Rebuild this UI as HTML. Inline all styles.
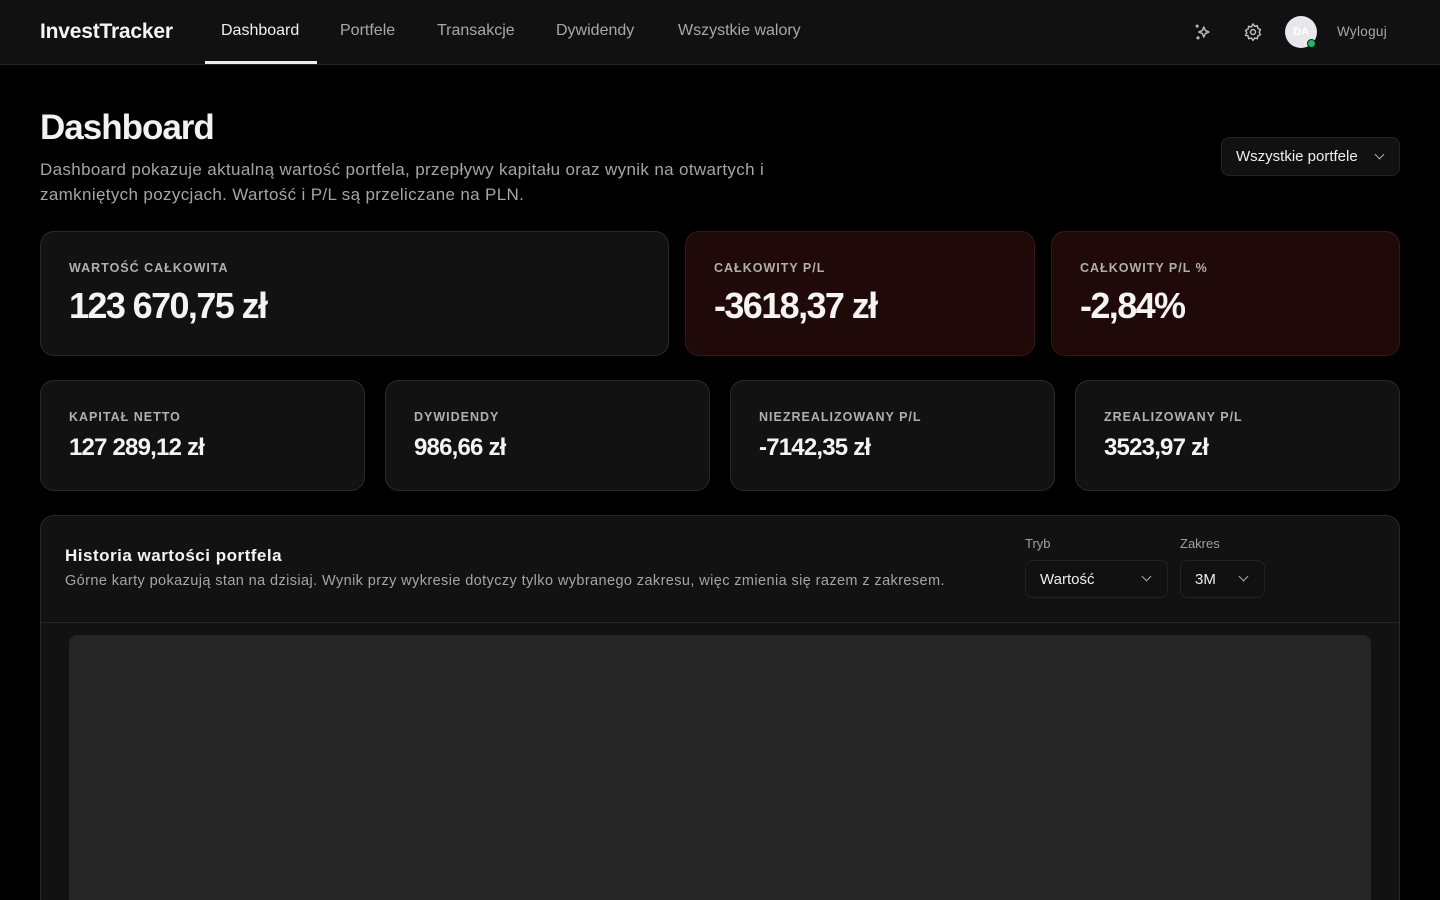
<!DOCTYPE html>
<html><head><meta charset="utf-8"><style>
*{box-sizing:border-box;margin:0;padding:0}
html,body{width:1440px;height:900px;overflow:hidden}
body{background:#000;font-family:"Liberation Sans","DejaVu Sans",sans-serif;color:#f2f2f2;position:relative}
.nav{height:65px;background:#111;border-bottom:1px solid #262626;position:relative}
.logo{position:absolute;left:40px;top:20px;font-size:21px;font-weight:bold;letter-spacing:-0.2px;color:#f4f4f4}
.tab{position:absolute;top:22px;font-size:16px;color:#a8a8a8}
.tab.act{color:#f0f0f0}
.ul{position:absolute;left:205px;width:112px;top:61px;height:3px;background:#eee}
.avatar{position:absolute;left:1285px;top:16px;width:32px;height:32px;border-radius:50%;background:#e8e8ea;color:#fff;font-size:11px;font-weight:bold;text-align:center;line-height:32px}
.dot{position:absolute;left:1307px;top:39px;width:9px;height:9px;border-radius:50%;background:#1fb86b;border:1px solid #111}
h1{position:absolute;left:40px;top:108px;font-size:35px;font-weight:bold;letter-spacing:-1px}
.desc{position:absolute;left:40px;top:157px;width:780px;font-size:17px;letter-spacing:0.35px;line-height:25px;color:#a5a5a5}
.sel{position:absolute;border:1px solid #232323;background:#111;border-radius:8px;font-size:15px;color:#eee}
.card{position:absolute;background:#121212;border:1px solid #2a2a2a;border-radius:14px}
.card.red{background:#200909;border-color:#3a1616}
.lbl{position:absolute;left:28px;font-size:12.5px;letter-spacing:1px;color:#b0b0b0;font-weight:bold}
.big{position:absolute;left:28px;top:53px;font-size:36px;font-weight:bold;letter-spacing:-1.6px;color:#f4f4f4}
.med{position:absolute;left:28px;top:53px;font-size:24px;font-weight:bold;letter-spacing:-0.8px;color:#f4f4f4}
.chev{position:absolute;width:7px;height:7px;border-right:1.5px solid #aaa;border-bottom:1.5px solid #aaa;transform:rotate(45deg)}
</style></head><body>
<div class="nav">
<div class="logo">InvestTracker</div>
<div class="tab act" style="left:221px">Dashboard</div>
<div class="tab" style="left:340px">Portfele</div>
<div class="tab" style="left:437px">Transakcje</div>
<div class="tab" style="left:556px">Dywidendy</div>
<div class="tab" style="left:678px">Wszystkie walory</div>
<div class="ul"></div>
<svg style="position:absolute;left:1193px;top:22px" width="20" height="20" viewBox="0 0 24 24" fill="none" stroke="#bbb" stroke-width="1.8" stroke-linejoin="round"><path d="M13 6l1.8 4.2L19 12l-4.2 1.8L13 18l-1.8-4.2L7 12l4.2-1.8z"/><path d="M5 3v4M3 5h4M6 17v4M4 19h4"/></svg>
<svg style="position:absolute;left:1243px;top:22px" width="20" height="20" viewBox="0 0 24 24" fill="none" stroke="#bbb" stroke-width="1.8"><circle cx="12" cy="12" r="3"/><path d="M12 2.5l2 2.6 3.2-.6.7 3.2 2.9 1.5-1.3 3 1.3 3-2.9 1.5-.7 3.2-3.2-.6-2 2.6-2-2.6-3.2.6-.7-3.2L3.2 16l1.3-3-1.3-3 2.9-1.5.7-3.2 3.2.6z"/></svg>
<div class="avatar">DA</div><div class="dot"></div>
<div class="tab" style="left:1337px;top:24px;font-size:13.5px;color:#a8a8a8;letter-spacing:0.3px">Wyloguj</div>
</div>
<h1>Dashboard</h1>
<div class="desc">Dashboard pokazuje aktualną wartość portfela, przepływy kapitału oraz wynik na otwartych i zamkniętych pozycjach. Wartość i P/L są przeliczane na PLN.</div>
<div class="sel" style="left:1221px;top:137px;width:179px;height:39px"><span style="position:absolute;left:14px;top:10px">Wszystkie portfele</span><div class="chev" style="left:154px;top:13px"></div></div>

<div class="card" style="left:40px;top:231px;width:629px;height:125px"><div class="lbl" style="top:29px">WARTOŚĆ CAŁKOWITA</div><div class="big">123 670,75 zł</div></div>
<div class="card red" style="left:685px;top:231px;width:350px;height:125px"><div class="lbl" style="top:29px">CAŁKOWITY P/L</div><div class="big">-3618,37 zł</div></div>
<div class="card red" style="left:1051px;top:231px;width:349px;height:125px"><div class="lbl" style="top:29px">CAŁKOWITY P/L %</div><div class="big">-2,84%</div></div>

<div class="card" style="left:40px;top:380px;width:325px;height:111px"><div class="lbl" style="top:29px">KAPITAŁ NETTO</div><div class="med">127 289,12 zł</div></div>
<div class="card" style="left:385px;top:380px;width:325px;height:111px"><div class="lbl" style="top:29px">DYWIDENDY</div><div class="med">986,66 zł</div></div>
<div class="card" style="left:730px;top:380px;width:325px;height:111px"><div class="lbl" style="top:29px">NIEZREALIZOWANY P/L</div><div class="med">-7142,35 zł</div></div>
<div class="card" style="left:1075px;top:380px;width:325px;height:111px"><div class="lbl" style="top:29px">ZREALIZOWANY P/L</div><div class="med">3523,97 zł</div></div>

<div class="card" style="left:40px;top:515px;width:1360px;height:385px;background:#121212;border-bottom:none;border-radius:14px 14px 0 0;overflow:hidden">
<div style="position:absolute;left:0;right:0;top:106px;height:1px;background:#262626"></div>
<div style="position:absolute;left:24px;top:30px;font-size:17px;font-weight:bold;color:#f4f4f4;letter-spacing:0.5px">Historia wartości portfela</div>
<div style="position:absolute;left:24px;top:57px;font-size:14.5px;color:#a5a5a5;letter-spacing:0.4px">Górne karty pokazują stan na dzisiaj. Wynik przy wykresie dotyczy tylko wybranego zakresu, więc zmienia się razem z zakresem.</div>
<div style="position:absolute;left:984px;top:20px;font-size:13px;color:#a0a0a0">Tryb</div>
<div style="position:absolute;left:1139px;top:20px;font-size:13px;color:#a0a0a0">Zakres</div>
<div class="sel" style="left:984px;top:44px;width:143px;height:38px"><span style="position:absolute;left:14px;top:10px">Wartość</span><div class="chev" style="left:117px;top:12px"></div></div>
<div class="sel" style="left:1139px;top:44px;width:85px;height:38px"><span style="position:absolute;left:14px;top:10px">3M</span><div class="chev" style="left:59px;top:12px"></div></div>
<div style="position:absolute;left:28px;top:119px;width:1302px;height:265px;background:#262626;border-radius:8px 8px 0 0"></div>
</div>
</body></html>
